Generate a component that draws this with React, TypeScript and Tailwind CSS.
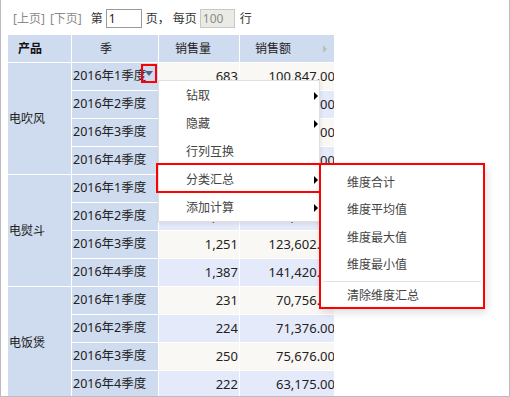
import React from "react";

type Row = { quarter: string; qty: string; amount: string };

const GROUPS: { product: string; rows: Row[] }[] = [
  {
    product: "电吹风",
    rows: [
      { quarter: "2016年1季度", qty: "683", amount: "100,847.00" },
      { quarter: "2016年2季度", qty: "712", amount: "105,300.00" },
      { quarter: "2016年3季度", qty: "655", amount: "96,420.00" },
      { quarter: "2016年4季度", qty: "701", amount: "103,500.00" },
    ],
  },
  {
    product: "电熨斗",
    rows: [
      { quarter: "2016年1季度", qty: "1,120", amount: "110,500.00" },
      { quarter: "2016年2季度", qty: "1,198", amount: "118,300.00" },
      { quarter: "2016年3季度", qty: "1,251", amount: "123,602.00" },
      { quarter: "2016年4季度", qty: "1,387", amount: "141,420.00" },
    ],
  },
  {
    product: "电饭煲",
    rows: [
      { quarter: "2016年1季度", qty: "231", amount: "70,756.00" },
      { quarter: "2016年2季度", qty: "224", amount: "71,376.00" },
      { quarter: "2016年3季度", qty: "250", amount: "75,676.00" },
      { quarter: "2016年4季度", qty: "222", amount: "63,175.00" },
    ],
  },
];

const MENU = [
  { label: "钻取", sub: true },
  { label: "隐藏", sub: true },
  { label: "行列互换", sub: false },
  { label: "分类汇总", sub: true },
  { label: "添加计算", sub: true },
];

const SUBMENU = ["维度合计", "维度平均值", "维度最大值", "维度最小值"];

function Arrow() {
  return (
    <span className="absolute right-[1px] top-1/2 -translate-y-1/2 border-y-[4px] border-y-transparent border-l-[4px] border-l-black" />
  );
}

export default function App() {
  return (
    <div className="relative w-[510px] h-[397px] overflow-hidden bg-white border-x border-b border-[#bcbcbc] font-['Noto_Sans','Noto_Sans_CJK_SC',sans-serif] text-[12px] text-[#222]">
      {/* Pager */}
      <div className="flex items-center h-[19px] mt-[9px] pl-[12px] leading-none">
        <span className="text-[#8a8a8a]">[上页]</span>
        <span className="ml-[5px] text-[#8a8a8a]">[下页]</span>
        <span className="ml-[9px] text-[#333]">第</span>
        <div className="ml-[3px] w-[36px] h-[19px] border border-[#9a9a9a] bg-white flex items-center pl-[2px] text-[#222]">
          1
        </div>
        <span className="ml-[4px] text-[#333]">页，</span>
        <span className="ml-[3px] text-[#333]">每页</span>
        <div className="ml-[3px] w-[35px] h-[19px] border border-[#c8c8c8] bg-[#ebebe6] flex items-center pl-[2px] text-[#8a8a8a]">
          100
        </div>
        <span className="ml-[5px] text-[#333]">行</span>
      </div>

      {/* Pivot table */}
      <div className="relative ml-[7px] mt-[7px] w-[326px] overflow-hidden">
        <div className="grid grid-cols-[63px_86px_80px_98px] auto-rows-[27px] gap-px bg-white">
          <div className="bg-[#cfdcef] flex items-center pl-[10px] font-bold text-[#111]">产品</div>
          <div className="bg-[#cfdcef] flex items-center pl-[28px]">季</div>
          <div className="bg-[#cfdcef] flex items-center pl-[16px]">销售量</div>
          <div className="bg-[#cfdcef] flex items-center pl-[15px]">销售额</div>

          {GROUPS.map((g, gi) => (
            <React.Fragment key={g.product}>
              <div
                className="bg-[#cfdcef] flex items-center pl-[1px]"
                style={{ gridRow: `${2 + gi * 4} / span 4`, gridColumn: "1" }}
              >
                {g.product}
              </div>
              {g.rows.map((r, ri) => {
                const row = 2 + gi * 4 + ri;
                const odd = ri % 2 === 1;
                const cell = odd ? "bg-[#e5eafb]" : "bg-[#faf8f4]";
                return (
                  <React.Fragment key={r.quarter}>
                    <div
                      className="bg-[#cfdcef] flex items-center pl-[1px] whitespace-nowrap text-[12.5px]"
                      style={{ gridRow: `${row}`, gridColumn: "2" }}
                    >
                      {r.quarter}
                    </div>
                    <div
                      className={`${cell} flex items-center justify-end pr-[1px] text-[13px]`}
                      style={{ gridRow: `${row}`, gridColumn: "3" }}
                    >
                      {r.qty}
                    </div>
                    <div
                      className={`${cell} flex items-center justify-end pr-[3px] whitespace-nowrap text-[13px]`}
                      style={{ gridRow: `${row}`, gridColumn: "4" }}
                    >
                      {r.amount}
                    </div>
                  </React.Fragment>
                );
              })}
            </React.Fragment>
          ))}
        </div>
        {/* header scroll hint */}
        <span className="absolute left-[315px] top-[10px] border-y-[4px] border-y-transparent border-l-[4px] border-l-[#bdbdbd]" />
      </div>

      {/* Dropdown trigger on first quarter cell */}
      <div className="absolute left-[140px] top-[64px] w-[16px] h-[19px] border-2 border-[#ff0000] flex items-center justify-center">
        <span className="border-x-[4px] border-x-transparent border-t-[5px] border-t-[#4d6383]" />
      </div>

      {/* Context menu */}
      <div className="absolute left-[157px] top-[80px] w-[162px] h-[142px] bg-white border border-[#e0e0e0] shadow-[1px_2px_4px_rgba(0,0,0,0.08)] pt-[1px] text-[#444]">
        {MENU.map((m) => (
          <div key={m.label} className="relative h-[28px] flex items-center pl-[27px] pr-[4px]">
            {m.label}
            {m.sub && <Arrow />}
          </div>
        ))}
      </div>

      {/* Highlight on 分类汇总 */}
      <div className="absolute left-[155px] top-[163px] w-[165px] h-[30px] border-2 border-[#ff0000]" />

      {/* Sub menu */}
      <div className="absolute left-[318px] top-[163px] w-[166px] h-[146px] bg-white border-2 border-[#ff0000] shadow-[2px_4px_8px_rgba(0,0,0,0.12)] pt-[4px] text-[#444]">
        {SUBMENU.map((s) => (
          <div key={s} className="h-[27.5px] flex items-center pl-[26px]">
            {s}
          </div>
        ))}
        <div className="mx-[2px] mt-[2px] h-px bg-[#e3e3e3]" />
        <div className="h-[27px] flex items-center pl-[26px]">清除维度汇总</div>
      </div>
    </div>
  );
}
